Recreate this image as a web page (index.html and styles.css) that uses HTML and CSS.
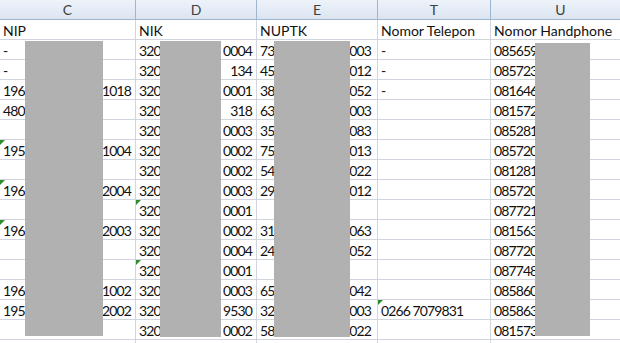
FILE: index.html
```html
<!DOCTYPE html>
<html>
<head>
<meta charset="utf-8">
<link rel="stylesheet" href="styles.css">
</head>
<body>
<div class="sheet">
  <div class="row head">
    <div class="h">C</div><div class="h">D</div><div class="h">E</div><div class="h">T</div><div class="h">U</div>
  </div>
  <div class="row titles"><div class="c">NIP</div><div class="c">NIK</div><div class="c">NUPTK</div><div class="c">Nomor Telepon</div><div class="c">Nomor Handphone</div></div>
  <div class="row"><div class="c">-</div><div class="c s"><span>320</span><span>0004</span></div><div class="c s e"><span>73</span><span>003</span></div><div class="c">-</div><div class="c">085659</div></div>
  <div class="row"><div class="c">-</div><div class="c s"><span>320</span><span>134</span></div><div class="c s e"><span>45</span><span>012</span></div><div class="c">-</div><div class="c">085723</div></div>
  <div class="row"><div class="c s"><span>196</span><span>1018</span></div><div class="c s"><span>320</span><span>0001</span></div><div class="c s e"><span>38</span><span>052</span></div><div class="c">-</div><div class="c">081646</div></div>
  <div class="row"><div class="c">480</div><div class="c s"><span>320</span><span>318</span></div><div class="c s e"><span>63</span><span>003</span></div><div class="c"></div><div class="c">081572</div></div>
  <div class="row"><div class="c"></div><div class="c s"><span>320</span><span>0003</span></div><div class="c s e"><span>35</span><span>083</span></div><div class="c"></div><div class="c">085281</div></div>
  <div class="row"><div class="c s flag"><span>195</span><span>1004</span></div><div class="c s"><span>320</span><span>0002</span></div><div class="c s e"><span>75</span><span>013</span></div><div class="c"></div><div class="c">085720</div></div>
  <div class="row"><div class="c"></div><div class="c s"><span>320</span><span>0002</span></div><div class="c s e"><span>54</span><span>022</span></div><div class="c"></div><div class="c">081281</div></div>
  <div class="row"><div class="c s flag"><span>196</span><span>2004</span></div><div class="c s"><span>320</span><span>0003</span></div><div class="c s e"><span>29</span><span>012</span></div><div class="c"></div><div class="c">085720</div></div>
  <div class="row"><div class="c"></div><div class="c s flag"><span>320</span><span>0001</span></div><div class="c"></div><div class="c"></div><div class="c">087721</div></div>
  <div class="row"><div class="c s flag"><span>196</span><span>2003</span></div><div class="c s"><span>320</span><span>0002</span></div><div class="c s e"><span>31</span><span>063</span></div><div class="c"></div><div class="c">081563</div></div>
  <div class="row"><div class="c"></div><div class="c s"><span>320</span><span>0004</span></div><div class="c s e"><span>24</span><span>052</span></div><div class="c"></div><div class="c">087720</div></div>
  <div class="row"><div class="c"></div><div class="c s flag"><span>320</span><span>0001</span></div><div class="c"></div><div class="c"></div><div class="c">087748</div></div>
  <div class="row"><div class="c s"><span>196</span><span>1002</span></div><div class="c s"><span>320</span><span>0003</span></div><div class="c s e"><span>65</span><span>042</span></div><div class="c"></div><div class="c">085860</div></div>
  <div class="row"><div class="c s"><span>195</span><span>2002</span></div><div class="c s"><span>320</span><span>9530</span></div><div class="c s e"><span>32</span><span>003</span></div><div class="c flag">0266 7079831</div><div class="c">085863</div></div>
  <div class="row"><div class="c"></div><div class="c s"><span>320</span><span>0002</span></div><div class="c s e"><span>58</span><span>022</span></div><div class="c"></div><div class="c">081573</div></div>
  <div class="row"><div class="c"></div><div class="c"></div><div class="c"></div><div class="c"></div><div class="c"></div></div>

  <div class="mask mask-c"></div>
  <div class="mask mask-d"></div>
  <div class="mask mask-e"></div>
  <div class="mask mask-u"></div>
</div>
</body>
</html>
```
FILE: styles.css
```css
html, body {
  margin: 0;
  padding: 0;
  background: #ffffff;
  overflow: hidden;
}
.sheet {
  position: relative;
  width: 620px;
  height: 343px;
  overflow: hidden;
  font-family: Lato, "Open Sans", sans-serif;
  font-size: 14px;
  color: #111;
}
.row {
  display: grid;
  grid-template-columns: 136px 121px 121px 113px 140px;
  height: 20px;
}
.head {
  background: linear-gradient(#eef3fa, #dbe5f1);
  border-bottom: 1px solid #9eb6ce;
  height: 19px;
}
.h {
  border-right: 1px solid #9eb6ce;
  text-align: center;
  line-height: 19px;
  color: #404040;
  font-size: 14px;
}
.c {
  box-sizing: border-box;
  border-right: 1px solid #d0d5de;
  border-bottom: 1px solid #d0d5de;
  padding: 0 4px 0 3px;
  line-height: 21px;
  white-space: nowrap;
  overflow: hidden;
  position: relative;
  letter-spacing: -0.9px;
}
.titles .c {
  letter-spacing: 0;
}
.s {
  display: flex;
  justify-content: space-between;
  padding-right: 4px;
}
.s.e {
  padding-right: 6px;
}
.flag::before {
  content: "";
  position: absolute;
  left: 0;
  top: 0;
  border-top: 5px solid #2e8b2e;
  border-right: 5px solid transparent;
}
.mask {
  position: absolute;
  background: #b1b1b1;
}
.mask-c { left: 25px; top: 41px; width: 78px; height: 295px; }
.mask-d { left: 160px; top: 41px; width: 61px; height: 296px; }
.mask-e { left: 274px; top: 41px; width: 76px; height: 296px; }
.mask-u { left: 535px; top: 43px; width: 55px; height: 293px; }
```
